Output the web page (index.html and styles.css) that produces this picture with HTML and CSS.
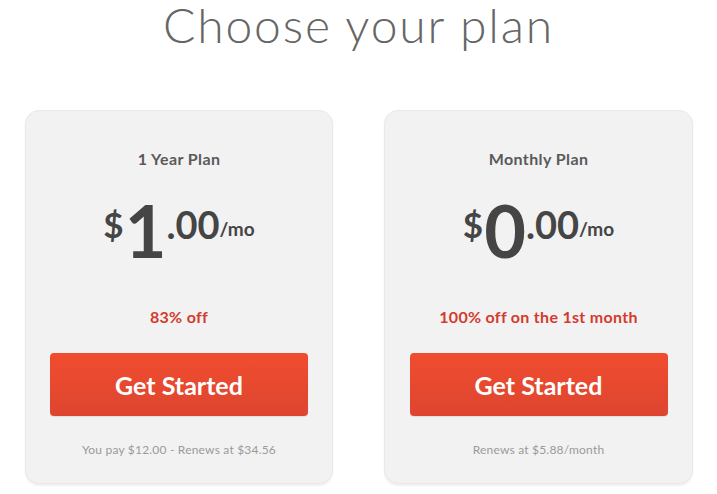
FILE: index.html
```html
<!DOCTYPE html>
<html>
<head>
<meta charset="utf-8">
<link rel="stylesheet" href="styles.css">
</head>
<body>
<div class="page">
  <h1 class="title">Choose your plan</h1>
  <div class="plans">
    <div class="card">
      <div class="plan-name">1 Year Plan</div>
      <div class="price">
        <span class="cur">$</span><span class="big">1</span><span class="cents">.00</span><span class="per">/mo</span>
      </div>
      <div class="deal">83% off</div>
      <a class="btn">Get Started</a>
      <div class="note">You pay $12.00 - Renews at $34.56</div>
    </div>
    <div class="card">
      <div class="plan-name">Monthly Plan</div>
      <div class="price">
        <span class="cur">$</span><span class="big">0</span><span class="cents">.00</span><span class="per">/mo</span>
      </div>
      <div class="deal">100% off on the 1st month</div>
      <a class="btn">Get Started</a>
      <div class="note">Renews at $5.88/month</div>
    </div>
  </div>
</div>
</body>
</html>
```

FILE: styles.css
```css
html, body {
  margin: 0;
  padding: 0;
  background: #ffffff;
}
body {
  font-family: Lato, "Open Sans", sans-serif;
  width: 717px;
  height: 494px;
  overflow: hidden;
}
.page {
  display: flex;
  flex-direction: column;
}
.title {
  margin: 0;
  font-size: 48px;
  line-height: 50px;
  font-weight: 300;
  color: #666666;
  text-align: center;
  letter-spacing: 1.8px;
}
.plans {
  display: grid;
  grid-template-columns: 308px 309px;
  column-gap: 51px;
  padding: 0 24px 0 25px;
  margin-top: 60px;
}
.card {
  background: #f2f2f2;
  border: 1px solid #e9e9e9;
  border-radius: 14px;
  box-shadow: 0 2px 2px rgba(0,0,0,0.06);
  display: flex;
  flex-direction: column;
  align-items: center;
  box-sizing: border-box;
  height: 374px;
}
.plan-name {
  margin-top: 38px;
  font-size: 16px;
  line-height: 20px;
  font-weight: 700;
  color: #5a5a5a;
  letter-spacing: 0.4px;
}
.price {
  margin-top: 25px;
  display: flex;
  align-items: flex-start;
  color: #454545;
  font-weight: 700;
  height: 72px;
}
.cur {
  font-size: 35px;
  line-height: 35px;
  margin-top: 13px;
  margin-right: 1px;
}
.big {
  font-size: 72px;
  line-height: 72px;
  letter-spacing: -1px;
}
.cents {
  font-size: 38px;
  line-height: 38px;
  margin-top: 11px;
  margin-left: 1px;
}
.per {
  font-size: 19px;
  line-height: 19px;
  margin-top: 25px;
  font-weight: 700;
}
.deal {
  margin-top: 41px;
  font-size: 16px;
  line-height: 20px;
  font-weight: 700;
  color: #d23b2d;
  letter-spacing: 0.3px;
}
.btn {
  margin-top: 26px;
  width: 258px;
  height: 63px;
  border-radius: 4px;
  background: linear-gradient(#f14d2f, #dd4530);
  color: #ffffff;
  font-size: 25px;
  font-weight: 700;
  display: flex;
  align-items: center;
  justify-content: center;
  box-shadow: 0 1px 1px rgba(0,0,0,0.08);
}
.note {
  margin-top: 26px;
  font-size: 12px;
  line-height: 16px;
  color: #9a9a9a;
  letter-spacing: 0.2px;
}
```
